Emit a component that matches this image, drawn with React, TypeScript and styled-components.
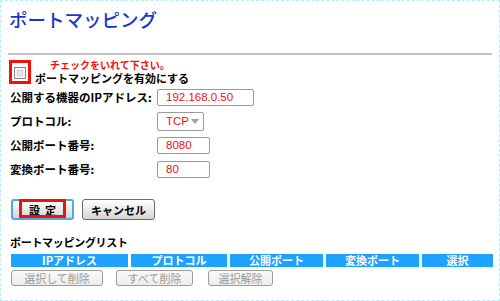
import { FC } from "react";
import styled, { createGlobalStyle } from "styled-components";

const GlobalStyle = createGlobalStyle`
    html, body {
        margin: 0;
        padding: 0;
        background: #ffffff;
    }
`;

const Frame = styled.div`
    width: 500px;
    height: 301px;
    box-sizing: border-box;
    border: 1px dashed #b4eef6;
    padding: 0 7px 0 7px;
    font-family: "Noto Sans CJK JP", "Noto Sans", sans-serif;
    color: #000;
    overflow: hidden;
`;

const Title = styled.h1`
    margin: 6px 0 0 1px;
    font-size: 18.5px;
    line-height: 24px;
    font-weight: 500;
    color: #1d36d2;
`;

const Rule = styled.div`
    margin-top: 22px;
    height: 2px;
    width: 484px;
    background: #c2c2c2;
`;

const EnableBlock = styled.div`
    display: grid;
    grid-template-columns: 22px 1fr;
    grid-template-rows: 11px 13px;
    column-gap: 4px;
    margin: 5px 0 0 1px;
`;

const CheckFrame = styled.div`
    grid-row: 1 / 3;
    grid-column: 1;
    box-sizing: border-box;
    border: 3px solid #ee1111;
    display: flex;
    align-items: flex-end;
    justify-content: center;
    padding-bottom: 2px;
`;

const CheckBox = styled.span`
    width: 10px;
    height: 10px;
    border: 1px solid #8a8a8a;
    background: #f4f4f4;
    display: flex;
    align-items: center;
    justify-content: center;
    &::after {
        content: "";
        width: 4px;
        height: 4px;
        border: 1px solid #cfcfcf;
        background: #e8e8e8;
    }
`;

const Note = styled.div`
    grid-column: 2;
    grid-row: 1;
    padding-left: 15px;
    font-size: 10px;
    line-height: 10px;
    font-weight: 700;
    color: #ee1111;
    white-space: nowrap;
`;

const EnableLabel = styled.div`
    grid-column: 2;
    grid-row: 2;
    align-self: end;
    font-size: 11px;
    line-height: 12px;
    font-weight: 700;
    white-space: nowrap;
`;

const Form = styled.div`
    margin: 1px 0 0 2px;
`;

const FormRow = styled.div`
    display: grid;
    grid-template-columns: 147px auto;
    align-items: center;
    height: 24px;
`;

const Label = styled.span`
    font-size: 11.5px;
    font-weight: 700;
    white-space: nowrap;
`;

const Field = styled.div<{ w: number }>`
    box-sizing: border-box;
    width: ${p => p.w}px;
    height: 17px;
    border: 1px solid #9a9a9a;
    border-radius: 2px;
    padding-left: 8px;
    display: flex;
    align-items: center;
    font-family: "Liberation Sans", Arial, sans-serif;
    font-size: 11.5px;
    color: #ee1111;
`;

const Select = styled(Field)`
    height: 19px;
    justify-content: space-between;
    padding-right: 4px;
`;

const Caret = styled.span`
    width: 0;
    height: 0;
    border-left: 4px solid transparent;
    border-right: 4px solid transparent;
    border-top: 5px solid #a0a0a0;
`;

const ButtonRow = styled.div`
    display: flex;
    gap: 8px;
    margin: 18px 0 0 3px;
`;

const Button = styled.div<{ focused?: boolean; w: number }>`
    position: relative;
    box-sizing: border-box;
    width: ${p => p.w}px;
    height: 21px;
    border: ${p => (p.focused ? "2px solid #54a8e0" : "1px solid #6a6a6a")};
    border-radius: 3px;
    background: linear-gradient(#ffffff, #e6e6e6 60%, #d4d4d4);
    display: flex;
    align-items: center;
    justify-content: center;
    font-size: 11px;
    font-weight: 700;
    white-space: pre;
`;

const Highlight = styled.span`
    position: absolute;
    left: 6px;
    top: -2px;
    width: 47px;
    height: 19px;
    box-sizing: border-box;
    border: 3px solid #ee1111;
`;

const ListTitle = styled.div`
    margin: 15px 0 0 2px;
    font-size: 11px;
    line-height: 14px;
    font-weight: 700;
    letter-spacing: -0.3px;
`;

const HeaderBar = styled.div`
    display: grid;
    grid-template-columns: 117px 96px 93px 93px 71px;
    column-gap: 3px;
    margin: 5px 0 0 3px;
`;

const HeaderCell = styled.div`
    height: 13px;
    background: #1ea2ff;
    color: #ffffff;
    font-size: 11px;
    line-height: 13px;
    font-weight: 700;
    text-align: center;
`;

const ListActions = styled.div`
    display: flex;
    margin: 3px 0 0 3px;
`;

const DisabledButton = styled.div<{ w: number; gap: number }>`
    box-sizing: border-box;
    width: ${p => p.w}px;
    height: 16px;
    margin-right: ${p => p.gap}px;
    border: 1px solid #9c9c9c;
    border-radius: 3px;
    background: linear-gradient(#fafafa, #ececec);
    color: #9a9a9a;
    font-size: 11px;
    line-height: 14px;
    text-align: center;
`;

const columns = ["IPアドレス", "プロトコル", "公開ポート", "変換ポート", "選択"];

const App: FC = () => {
    return (
        <Frame>
            <GlobalStyle />
            <Title>ポートマッピング</Title>
            <Rule />
            <EnableBlock>
                <CheckFrame>
                    <CheckBox />
                </CheckFrame>
                <Note>チェックをいれて下さい。</Note>
                <EnableLabel>ポートマッピングを有効にする</EnableLabel>
            </EnableBlock>
            <Form>
                <FormRow>
                    <Label>公開する機器のIPアドレス:</Label>
                    <Field w={97}>192.168.0.50</Field>
                </FormRow>
                <FormRow>
                    <Label>プロトコル:</Label>
                    <Select w={47}>
                        TCP
                        <Caret />
                    </Select>
                </FormRow>
                <FormRow>
                    <Label>公開ポート番号:</Label>
                    <Field w={53}>8080</Field>
                </FormRow>
                <FormRow>
                    <Label>変換ポート番号:</Label>
                    <Field w={53}>80</Field>
                </FormRow>
            </Form>
            <ButtonRow>
                <Button focused w={63}>
                    <Highlight />
                    {"設  定"}
                </Button>
                <Button w={73}>キャンセル</Button>
            </ButtonRow>
            <ListTitle>ポートマッピングリスト</ListTitle>
            <HeaderBar>
                {columns.map(c => (
                    <HeaderCell key={c}>{c}</HeaderCell>
                ))}
            </HeaderBar>
            <ListActions>
                <DisabledButton w={92} gap={13}>選択して削除</DisabledButton>
                <DisabledButton w={77} gap={15}>すべて削除</DisabledButton>
                <DisabledButton w={65} gap={0}>選択解除</DisabledButton>
            </ListActions>
        </Frame>
    );
};

export default App;
